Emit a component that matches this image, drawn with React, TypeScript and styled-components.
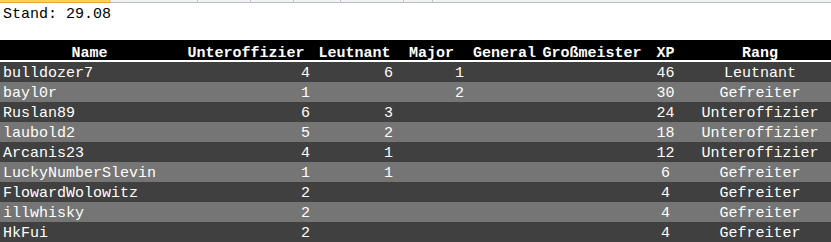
import styled, { createGlobalStyle } from 'styled-components';

const GlobalStyle = createGlobalStyle`
  html, body {
    margin: 0;
    padding: 0;
    background: #fff;
  }
  body {
    font-family: "Liberation Mono", "Courier New", monospace;
    font-size: 15px;
  }
`;

type Player = {
  name: string;
  unter?: number;
  leutnant?: number;
  major?: number;
  general?: number;
  gross?: number;
  xp: number;
  rang: string;
};

const players: Player[] = [
  { name: 'bulldozer7', unter: 4, leutnant: 6, major: 1, xp: 46, rang: 'Leutnant' },
  { name: 'bayl0r', unter: 1, major: 2, xp: 30, rang: 'Gefreiter' },
  { name: 'Ruslan89', unter: 6, leutnant: 3, xp: 24, rang: 'Unteroffizier' },
  { name: 'laubold2', unter: 5, leutnant: 2, xp: 18, rang: 'Unteroffizier' },
  { name: 'Arcanis23', unter: 4, leutnant: 1, xp: 12, rang: 'Unteroffizier' },
  { name: 'LuckyNumberSlevin', unter: 1, leutnant: 1, xp: 6, rang: 'Gefreiter' },
  { name: 'FlowardWolowitz', unter: 2, xp: 4, rang: 'Gefreiter' },
  { name: 'illwhisky', unter: 2, xp: 4, rang: 'Gefreiter' },
  { name: 'HkFui', unter: 2, xp: 4, rang: 'Gefreiter' },
];

// column widths, taken from the sheet
const COLS = [179, 134, 83, 71, 75, 100, 47, 142];

const headerCells = ['Name', 'Unteroffizier', 'Leutnant', 'Major', 'General', 'Großmeister', 'XP', 'Rang'];

// little column header strip of the sheet at the very top
const STRIP = [111, 87, 53, 43, 47, 63, 29];

export default function App() {
  return (
    <>
      <GlobalStyle />
      <Strip>
        {STRIP.map((w, i) => (
          <StripCell key={i} $active={i === 0} style={{ width: w }} />
        ))}
        <StripRest />
      </Strip>
      <Stand>Stand: 29.08</Stand>
      <Table>
        <colgroup>
          {COLS.map((w, i) => (
            <col key={i} style={{ width: w }} />
          ))}
        </colgroup>
        <thead>
          <tr>
            {headerCells.map((h) => (
              <Th key={h}>{h}</Th>
            ))}
          </tr>
        </thead>
        <tbody>
          {players.map((p, i) => (
            <Row key={p.name} $odd={i % 2 === 1}>
              <NameCell>{p.name}</NameCell>
              <NumCell>{p.unter}</NumCell>
              <NumCell>{p.leutnant}</NumCell>
              <NumCell>{p.major}</NumCell>
              <NumCell>{p.general}</NumCell>
              <NumCell>{p.gross}</NumCell>
              <CenterCell>{p.xp}</CenterCell>
              <CenterCell>{p.rang}</CenterCell>
            </Row>
          ))}
        </tbody>
      </Table>
    </>
  );
}

const Strip = styled.div`
  display: flex;
  height: 3px;
`;

const StripCell = styled.div<{ $active: boolean }>`
  box-sizing: border-box;
  height: 3px;
  background: ${(p) => (p.$active ? '#f6d35a' : '#f3f3f3')};
  border-bottom: 1px solid ${(p) => (p.$active ? '#e3a73a' : '#b8bcc4')};
  border-right: 1px solid #c4c8ce;
`;

const StripRest = styled.div`
  flex: 1;
  box-sizing: border-box;
  height: 3px;
  background: #f3f3f3;
  border-bottom: 1px solid #b8bcc4;
`;

const Stand = styled.div`
  height: 37px;
  padding: 3px 0 0 3px;
  box-sizing: border-box;
  line-height: 17px;
  color: #000;
`;

const Table = styled.table`
  width: 831px;
  table-layout: fixed;
  border-collapse: collapse;
  border-spacing: 0;
  color: #fff;
`;

const Th = styled.th`
  height: 20px;
  padding: 7px 0 0;
  box-sizing: border-box;
  background: #000;
  font-weight: bold;
  text-align: center;
  line-height: 13px;
  white-space: nowrap;
  border-bottom: 2px solid #fff;
`;

const Row = styled.tr<{ $odd: boolean }>`
  background: ${(p) => (p.$odd ? '#757575' : '#404040')};
`;

const Cell = styled.td`
  height: 20px;
  padding: 3px 0 0;
  box-sizing: border-box;
  line-height: 17px;
  white-space: nowrap;
`;

const NameCell = styled(Cell)`
  text-align: left;
  padding-left: 3px;
`;

const NumCell = styled(Cell)`
  text-align: right;
  padding-right: 3px;
`;

const CenterCell = styled(Cell)`
  text-align: center;
`;
